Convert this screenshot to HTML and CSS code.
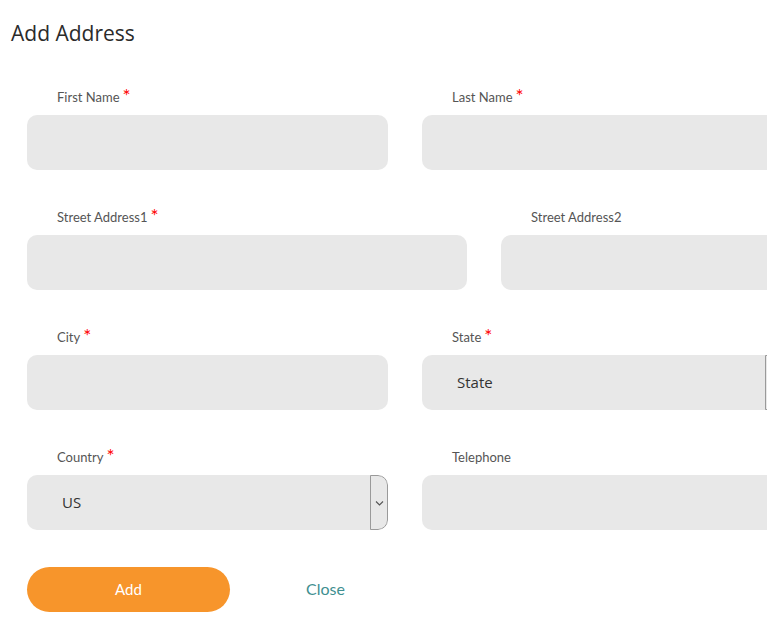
FILE: index.html
```html
<!DOCTYPE html>
<html>
<head>
<meta charset="utf-8">
<link rel="stylesheet" href="styles.css">
</head>
<body>
<div class="page">
  <h1 class="title">Add Address</h1>
  <form class="form">
    <div class="row row-narrow">
      <div class="field">
        <label class="label">First Name<span class="req">*</span></label>
        <input class="input" type="text">
      </div>
      <div class="field">
        <label class="label">Last Name<span class="req">*</span></label>
        <input class="input" type="text">
      </div>
    </div>
    <div class="row row-wide">
      <div class="field">
        <label class="label">Street Address1<span class="req">*</span></label>
        <input class="input" type="text">
      </div>
      <div class="field">
        <label class="label">Street Address2</label>
        <input class="input" type="text">
      </div>
    </div>
    <div class="row row-narrow">
      <div class="field">
        <label class="label">City<span class="req">*</span></label>
        <input class="input" type="text">
      </div>
      <div class="field">
        <label class="label">State<span class="req">*</span></label>
        <div class="select">
          <span class="select-value">State</span>
          <span class="select-arrow"><svg width="9" height="6" viewBox="0 0 9 6"><path d="M1 1.5l3.5 3.5 3.5-3.5" fill="none" stroke="#555" stroke-width="1.1"/></svg></span>
        </div>
      </div>
    </div>
    <div class="row row-narrow">
      <div class="field">
        <label class="label">Country<span class="req">*</span></label>
        <div class="select">
          <span class="select-value">US</span>
          <span class="select-arrow"><svg width="9" height="6" viewBox="0 0 9 6"><path d="M1 1.5l3.5 3.5 3.5-3.5" fill="none" stroke="#555" stroke-width="1.1"/></svg></span>
        </div>
      </div>
      <div class="field">
        <label class="label">Telephone</label>
        <input class="input" type="text">
      </div>
    </div>
    <div class="actions">
      <button type="button" class="btn-add">Add</button>
      <button type="button" class="btn-close">Close</button>
    </div>
  </form>
</div>
</body>
</html>
```
FILE: styles.css
```css
html, body {
  margin: 0;
  padding: 0;
  overflow: hidden;
  background: #fff;
}
.page {
  padding-top: 19px;
  font-family: "Lato", "Open Sans", sans-serif;
}
.title {
  margin: 0 0 40px 11px;
  font-family: "Open Sans", sans-serif;
  font-weight: 400;
  font-size: 21px;
  line-height: 28px;
  color: #2b2b2b;
}
.form {
  padding-left: 27px;
}
.row {
  display: flex;
  gap: 34px;
  margin-bottom: 37px;
}
.field {
  display: flex;
  flex-direction: column;
  flex-shrink: 0;
}
.row-narrow .field { width: 361px; }
.row-wide .field { width: 440px; }
.label {
  padding-left: 30px;
  height: 20px;
  line-height: 21px;
  margin-bottom: 8px;
  font-size: 13px;
  color: #555;
}
.req {
  color: #f00;
  font-size: 19px;
  line-height: 0;
  margin-left: 3px;
  position: relative;
  top: 1px;
}
.input {
  box-sizing: border-box;
  height: 55px;
  width: 100%;
  border: none;
  border-radius: 10px;
  background: #e8e8e8;
  outline: none;
  padding: 0 35px;
}
.select {
  box-sizing: border-box;
  height: 55px;
  border-radius: 10px;
  background: #e8e8e8;
  display: flex;
  align-items: center;
  overflow: hidden;
}
.select-value {
  flex: 1;
  padding-left: 35px;
  padding-bottom: 2px;
  font-family: "Open Sans", sans-serif;
  font-size: 15px;
  color: #333;
}
.select-arrow {
  box-sizing: border-box;
  width: 18px;
  height: 55px;
  border: 1px solid #9a9a9a;
  border-radius: 0 10px 10px 0;
  display: flex;
  align-items: center;
  justify-content: center;
}
.actions {
  display: flex;
  align-items: center;
}
.btn-add {
  width: 203px;
  height: 45px;
  border: none;
  border-radius: 23px;
  background: #f7952b;
  color: #fff;
  font-family: "Lato", sans-serif;
  font-size: 15px;
  padding-bottom: 2px;
  cursor: pointer;
}
.btn-close {
  margin-left: 56px;
  border: none;
  background: none;
  padding: 0 20px 2px;
  color: #3f8f90;
  font-family: "Lato", sans-serif;
  font-size: 16px;
  cursor: pointer;
}
```
